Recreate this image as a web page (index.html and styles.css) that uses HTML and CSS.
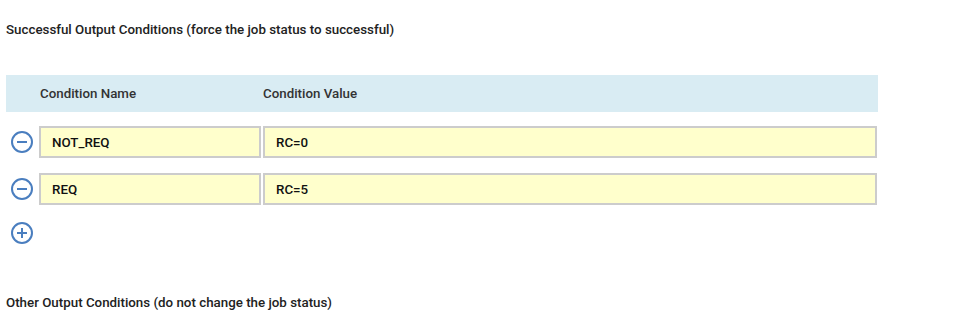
FILE: index.html
```html
<!DOCTYPE html>
<html lang="en">
<head>
    <meta charset="UTF-8">
    <meta name="viewport" content="width=device-width, initial-scale=1.0">
    <title>Output Conditions</title>
    <link rel="stylesheet" href="styles.css">
</head>
<body>
    <div class="section">
        <h3 class="section-title">Successful Output Conditions (force the job status to successful)</h3>

        <div class="cond-table">
            <div class="cond-head">
                <span></span>
                <span>Condition Name</span>
                <span>Condition Value</span>
            </div>

            <div class="cond-row">
                <button class="icon-btn" title="Remove">
                    <svg width="22" height="22" viewBox="0 0 22 22"><circle cx="11" cy="11" r="10" fill="none" stroke="#4a7ebf" stroke-width="2"/><path d="M6 11h10" stroke="#4a7ebf" stroke-width="2"/></svg>
                </button>
                <input class="cond-input" type="text" value="NOT_REQ">
                <input class="cond-input" type="text" value="RC=0">
            </div>

            <div class="cond-row">
                <button class="icon-btn" title="Remove">
                    <svg width="22" height="22" viewBox="0 0 22 22"><circle cx="11" cy="11" r="10" fill="none" stroke="#4a7ebf" stroke-width="2"/><path d="M6 11h10" stroke="#4a7ebf" stroke-width="2"/></svg>
                </button>
                <input class="cond-input" type="text" value="REQ">
                <input class="cond-input" type="text" value="RC=5">
            </div>

            <div class="cond-add">
                <button class="icon-btn" title="Add">
                    <svg width="22" height="22" viewBox="0 0 22 22"><circle cx="11" cy="11" r="10" fill="none" stroke="#4a7ebf" stroke-width="2"/><path d="M6 11h10M11 6v10" stroke="#4a7ebf" stroke-width="2"/></svg>
                </button>
            </div>
        </div>
    </div>

    <div class="section">
        <h3 class="section-title">Other Output Conditions (do not change the job status)</h3>
    </div>
</body>
</html>
```

FILE: styles.css
```css
body {
    font-family: Roboto, "Liberation Sans", Arial, sans-serif;
    color: #222;
    margin: 0;
    padding: 21px 0 0 6px;
    background-color: #fff;
}

.section-title {
    font-size: 13.33px;
    font-weight: 500;
    margin: 0;
    line-height: 18px;
}

.cond-table {
    width: 872px;
    margin-top: 36px;
}

.cond-head,
.cond-row {
    display: grid;
    grid-template-columns: 31px 222px 1fr;
    column-gap: 2px;
}

.cond-head {
    background-color: #d9ecf3;
    height: 37px;
    align-items: center;
    font-size: 13.33px;
    font-weight: 500;
    color: #333;
    margin-bottom: 14px;
}

.cond-head span:nth-child(2) { padding-left: 1px; }

.cond-row {
    margin-bottom: 15px;
    width: 871px;
}

.cond-input {
    height: 32px;
    box-sizing: border-box;
    border: 2px solid #ccc;
    background-color: #ffffcc;
    padding: 0 11px;
    font-family: inherit;
    font-size: 13.33px;
    font-weight: 500;
    color: #111;
    outline: none;
    width: 100%;
}

.icon-btn {
    background: none;
    border: none;
    padding: 0 0 0 5px;
    width: 31px;
    display: flex;
    align-items: center;
    cursor: pointer;
}

.icon-btn svg { display: block; }

.cond-add {
    height: 28px;
    display: flex;
    margin-top: -1px;
}

.section + .section {
    margin-top: 47px;
}
```
